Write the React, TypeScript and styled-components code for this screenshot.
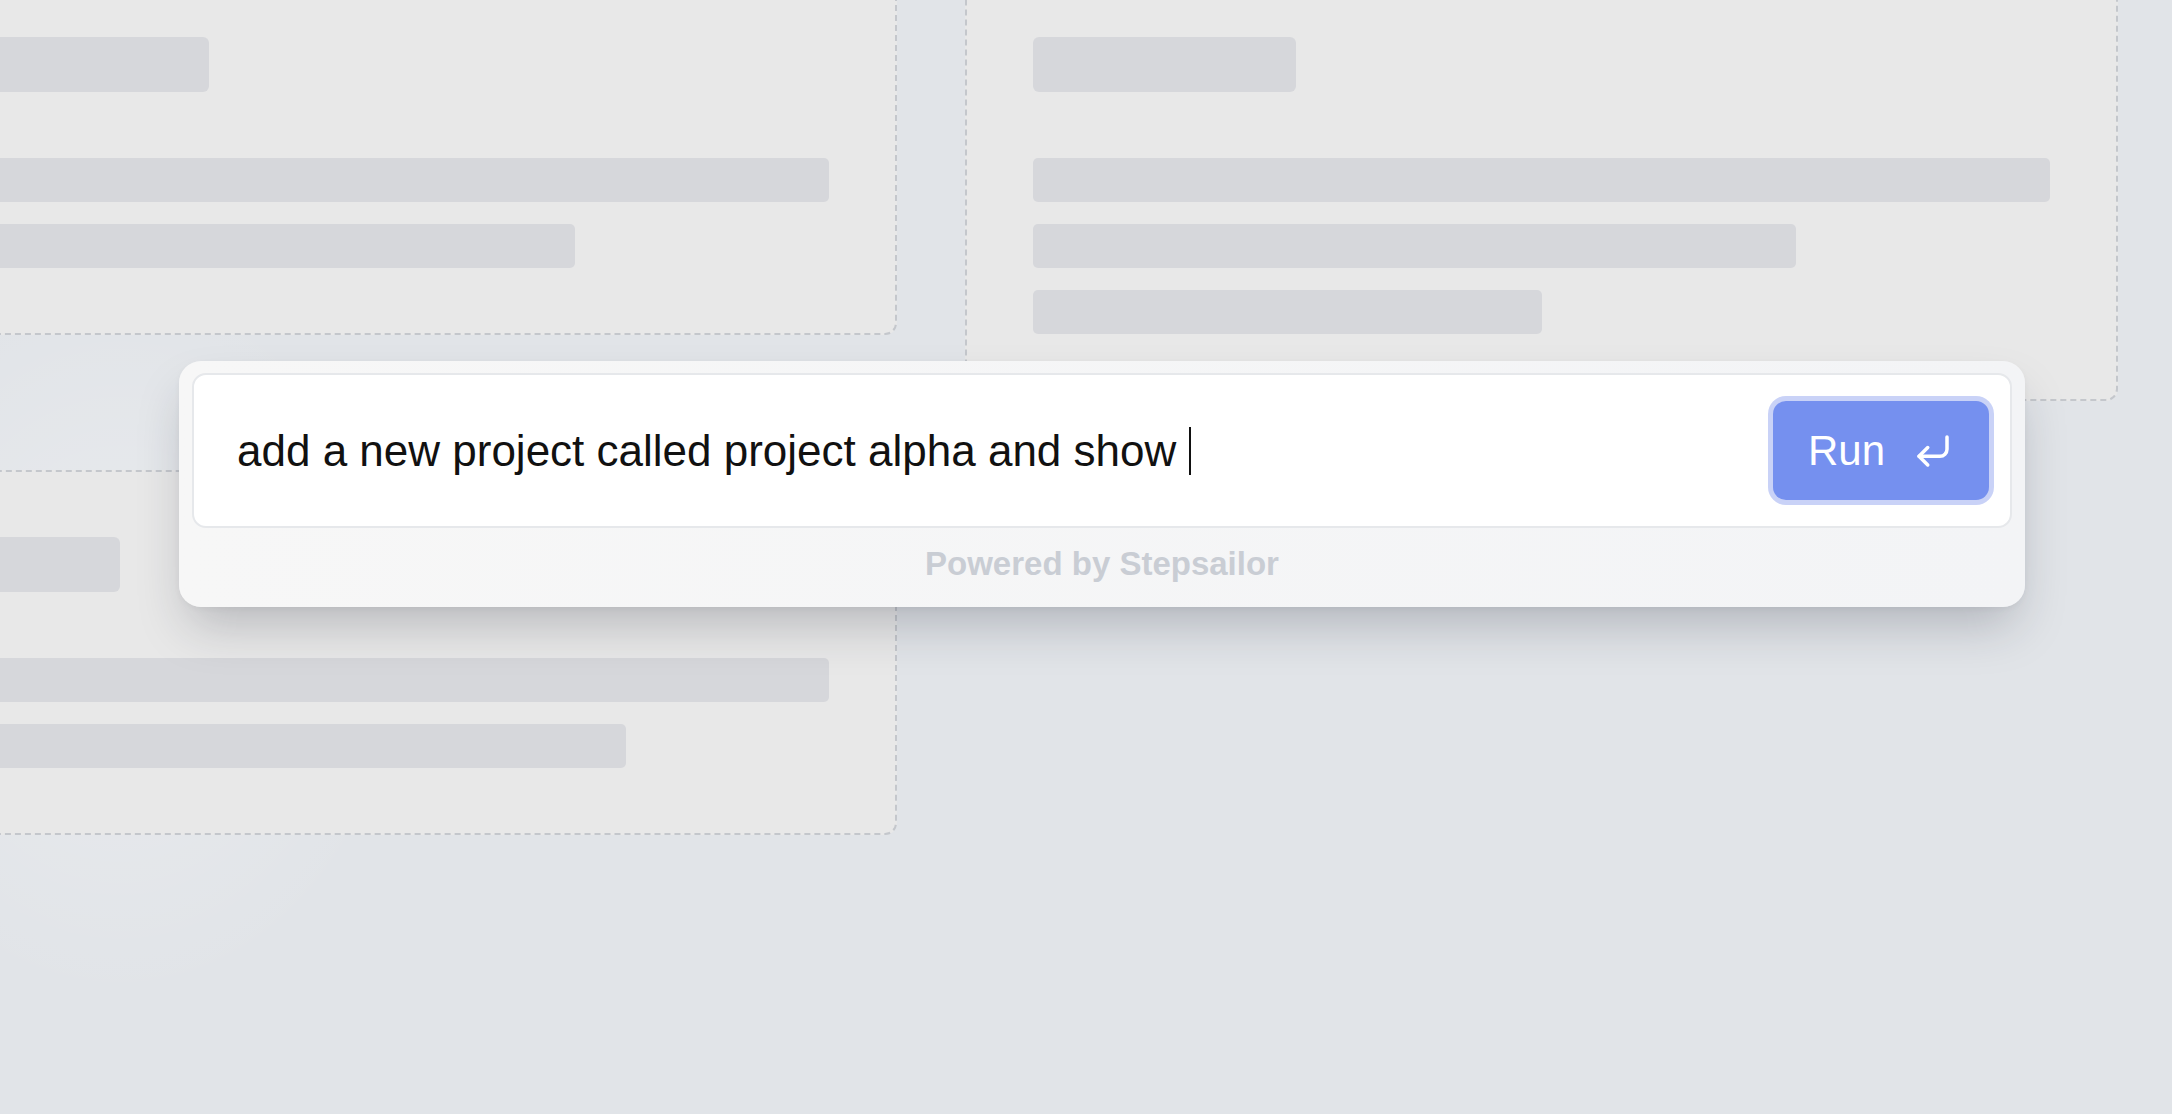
import React from 'react'
import styled, { createGlobalStyle } from 'styled-components'
import { CornerDownLeft } from 'lucide-react'

const GlobalStyle = createGlobalStyle`
  html, body { margin: 0; padding: 0; }
  body {
    background: #e1e4e8;
    font-family: "Liberation Sans", Arial, sans-serif;
    overflow: hidden;
  }
`

const Page = styled.div`
  position: relative;
  width: 2172px;
  height: 1114px;
  overflow: hidden;
  background:
    radial-gradient(ellipse 420px 520px at 120px 640px, rgba(255,255,255,0.28), rgba(255,255,255,0) 70%),
    #e1e4e8;
`

const Board = styled.div`
  display: grid;
  grid-template-columns: 1153px 1153px;
  column-gap: 68px;
  row-gap: 69px;
  align-items: start;
  margin: -30px 0 0 -256px;
`

const Card = styled.div`
  box-sizing: border-box;
  background: #e8e8e8;
  border: 2px dashed #c4c7cc;
  border-radius: 12px;
  padding: 65px 66px;
  display: flex;
  flex-direction: column;
  gap: 22px;
`

const TitleBar = styled.div<{ $w: number }>`
  width: ${p => p.$w}px;
  height: 55px;
  border-radius: 6px;
  background: #d6d7db;
  margin-bottom: 44px;
`

const LineBar = styled.div<{ $w: number }>`
  width: ${p => p.$w}%;
  height: 44px;
  border-radius: 5px;
  background: #d6d7db;
`

const Palette = styled.div`
  position: absolute;
  left: 179px;
  top: 361px;
  width: 1846px;
  box-sizing: border-box;
  padding: 12px 13px 0;
  background: linear-gradient(90deg, #f7f7f7, #f3f4f6);
  border-radius: 22px;
  box-shadow: 0 26px 50px -10px rgba(30, 35, 50, 0.25), 0 2px 6px rgba(0, 0, 0, 0.04);
`

const InputBox = styled.div`
  box-sizing: border-box;
  height: 155px;
  background: #ffffff;
  border: 2px solid #e6e8eb;
  border-radius: 14px;
  display: flex;
  align-items: center;
  padding: 0 21px 0 43px;
`

const Query = styled.div`
  flex: 1;
  display: flex;
  align-items: center;
  font-size: 44px;
  color: #111111;
  white-space: pre;
`

const Caret = styled.span`
  display: inline-block;
  width: 2px;
  height: 48px;
  background: #111111;
`

const RunButton = styled.button`
  height: 99px;
  box-sizing: border-box;
  padding: 0 35px 0 35px;
  border: none;
  border-radius: 13px;
  background: #7590ef;
  color: #ffffff;
  box-shadow: 0 0 0 5px #c9d2f7;
  display: flex;
  align-items: center;
  gap: 27px;
  font-family: "Liberation Sans", Arial, sans-serif;
  font-size: 42px;
  cursor: pointer;
`

const Footer = styled.div`
  padding: 19px 0 27px;
  text-align: center;
  font-size: 33px;
  line-height: 33px;
  font-weight: 700;
  color: #c9cdd4;
`

export default function App() {
  return (
    <>
      <GlobalStyle />
      <Page>
        <Board>
          <Card>
            <TitleBar $w={397} />
            <LineBar $w={100} />
            <LineBar $w={75} />
          </Card>
          <Card>
            <TitleBar $w={263} />
            <LineBar $w={100} />
            <LineBar $w={75} />
            <LineBar $w={50} />
          </Card>
          <Card>
            <TitleBar $w={308} />
            <LineBar $w={100} />
            <LineBar $w={80} />
          </Card>
        </Board>
        <Palette>
          <InputBox>
            <Query>
              {'add a new project called project alpha and show '}
              <Caret />
            </Query>
            <RunButton>
              Run
              <CornerDownLeft size={42} strokeWidth={2} />
            </RunButton>
          </InputBox>
          <Footer>Powered by Stepsailor</Footer>
        </Palette>
      </Page>
    </>
  )
}
